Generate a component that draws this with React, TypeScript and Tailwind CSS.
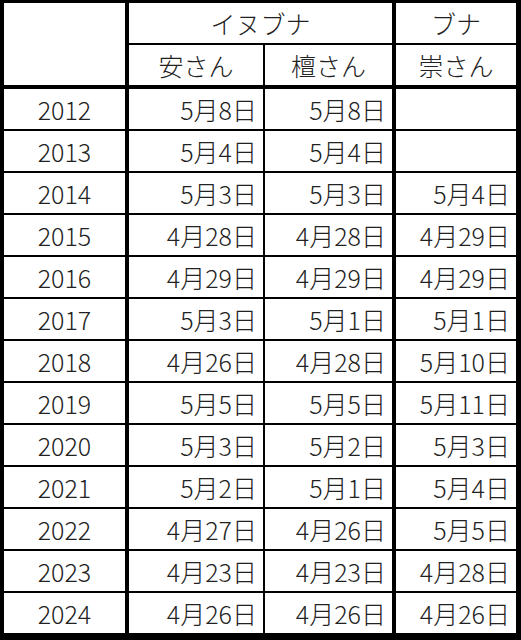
import React from 'react';

type Row = { year: string; yasu: string; dan: string; sou: string };

const rows: Row[] = [
  { year: '2012', yasu: '5月8日', dan: '5月8日', sou: '' },
  { year: '2013', yasu: '5月4日', dan: '5月4日', sou: '' },
  { year: '2014', yasu: '5月3日', dan: '5月3日', sou: '5月4日' },
  { year: '2015', yasu: '4月28日', dan: '4月28日', sou: '4月29日' },
  { year: '2016', yasu: '4月29日', dan: '4月29日', sou: '4月29日' },
  { year: '2017', yasu: '5月3日', dan: '5月1日', sou: '5月1日' },
  { year: '2018', yasu: '4月26日', dan: '4月28日', sou: '5月10日' },
  { year: '2019', yasu: '5月5日', dan: '5月5日', sou: '5月11日' },
  { year: '2020', yasu: '5月3日', dan: '5月2日', sou: '5月3日' },
  { year: '2021', yasu: '5月2日', dan: '5月1日', sou: '5月4日' },
  { year: '2022', yasu: '4月27日', dan: '4月26日', sou: '5月5日' },
  { year: '2023', yasu: '4月23日', dan: '4月23日', sou: '4月28日' },
  { year: '2024', yasu: '4月26日', dan: '4月26日', sou: '4月26日' },
];

function DataRow({ row, last }: { row: Row; last: boolean }) {
  return (
    <div className={last ? 'flex h-[40px]' : 'flex h-[42px] border-b-2 border-black'}>
      <div className="flex w-[125px] items-center justify-center border-r-4 border-black">{row.year}</div>
      <div className="flex w-[136px] items-center justify-end border-r-2 border-black pr-[6px]">{row.yasu}</div>
      <div className="flex w-[131px] items-center justify-end border-r-4 border-black pr-[6px]">{row.dan}</div>
      <div className="flex w-[120px] items-center justify-end pr-[6px]">{row.sou}</div>
    </div>
  );
}

export default function App() {
  return (
    <div
      className="h-[640px] w-[521px] border-t-[3px] border-r-[5px] border-b-[7px] border-l-4 border-black bg-white text-[25px] leading-none font-light text-[#222]"
      style={{ fontFamily: '"Noto Sans CJK JP", "Noto Sans", sans-serif' }}
    >
      {/* header */}
      <div className="flex h-[86px] border-b-4 border-black">
        <div className="w-[125px] border-r-4 border-black" />
        <div className="flex flex-col">
          <div className="flex h-[42px] border-b-2 border-black">
            <div className="flex w-[267px] items-center justify-center border-r-4 border-black">イヌブナ</div>
            <div className="flex w-[120px] items-center justify-center">ブナ</div>
          </div>
          <div className="flex h-[40px]">
            <div className="flex w-[136px] items-center justify-center border-r-2 border-black">安さん</div>
            <div className="flex w-[131px] items-center justify-center border-r-4 border-black">檀さん</div>
            <div className="flex w-[120px] items-center justify-center">崇さん</div>
          </div>
        </div>
      </div>
      {rows.map((r, i) => (
        <DataRow key={r.year} row={r} last={i === rows.length - 1} />
      ))}
    </div>
  );
}
